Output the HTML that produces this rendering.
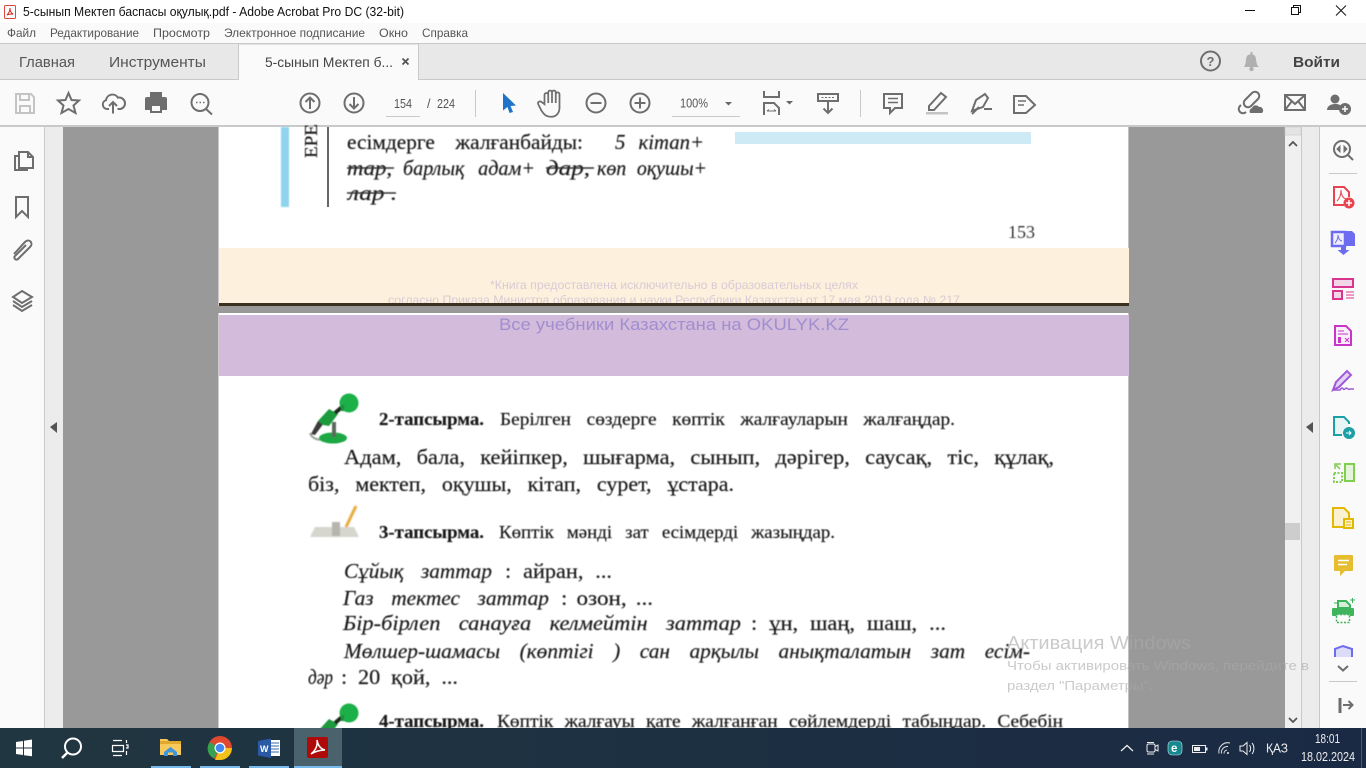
<!DOCTYPE html>
<html><head><meta charset="utf-8"><title>5-сынып Мектеп баспасы оқулық.pdf - Adobe Acrobat Pro DC (32-bit)</title>
<style>
html,body{margin:0;padding:0;width:1366px;height:768px;overflow:hidden;background:#fff}
svg{display:block;position:absolute;left:0;top:0}
text{font-family:"Liberation Sans",sans-serif}
.s text{font-family:"Liberation Serif",serif;fill:#151515;stroke:#151515;stroke-width:.15;font-size:21px}
.s .h{font-size:18px}
.i{font-style:italic}
.b{font-weight:bold}
.g{fill:none;stroke:#6e6e6e;stroke-width:2}
</style></head><body>
<svg width="1366" height="768" viewBox="0 0 1366 768">
<defs>
<filter id="bl" x="-5%" y="-5%" width="110%" height="110%"><feGaussianBlur stdDeviation="0.4"/></filter>
<filter id="bl2" x="-20%" y="-20%" width="140%" height="140%"><feGaussianBlur stdDeviation="0.7"/></filter>
<linearGradient id="tb" x1="0" x2="1" y1="0" y2="0"><stop offset="0" stop-color="#203640"/><stop offset="1" stop-color="#1a2a44"/></linearGradient>
<g id="mic">
<path d="M3 41C5 47 12 49 20 47" fill="none" stroke="#9aa59a" stroke-width="2"/>
<ellipse cx="26" cy="46" rx="14" ry="5.500" fill="#1aa843"/>
<rect x="25" y="30" width="4" height="15" fill="#5c6a5c"/>
<path d="M4 42L11 29 17 31 8 43Z" fill="#3a3a3a"/>
<path d="M11 29L22 17 31 22 22 34 16 33Z" fill="#1a9a3c"/>
<path d="M28 21L35 15" stroke="#1c2a1c" stroke-width="4"/>
<circle cx="42" cy="11" r="9.500" fill="#1fb04a"/>
<path d="M36 13L35 19" stroke="#1e8d3c" stroke-width="3"/>
</g>
</defs>

<!-- chrome backgrounds -->
<rect width="1366" height="23" fill="#fff"/>
<rect y="23" width="1366" height="20" fill="#fafafa"/>
<rect y="43" width="1366" height="1" fill="#c9c9c9"/>
<rect y="44" width="1366" height="35" fill="#e8e8e8"/>
<rect y="79" width="1366" height="1" fill="#c9c9c9"/>
<rect y="80" width="1366" height="45" fill="#fafafa"/>
<rect y="125" width="1366" height="2" fill="#c9c9c9"/>
<path d="M238.500 80V44H418.500V80" fill="#fafafa" stroke="#c9c9c9"/>
<rect x="239" y="78" width="179" height="3" fill="#fafafa"/>

<!-- viewer backgrounds -->
<rect x="0" y="127" width="44" height="601" fill="#fafafa"/>
<rect x="44" y="127" width="1" height="601" fill="#c9c9c9"/>
<rect x="45" y="127" width="18" height="601" fill="#ececec"/>
<rect x="63" y="127" width="1222" height="601" fill="#999"/>
<rect x="218" y="127" width="911" height="179" fill="#fff"/>
<rect x="218" y="313" width="911" height="415" fill="#fff"/>
<rect x="218" y="127" width="1" height="179" fill="#c9c9c9"/>
<rect x="218" y="313" width="1" height="415" fill="#ccc"/>
<rect x="1128" y="127" width="1" height="601" fill="#c0c0c0"/>

<!-- page top -->
<rect x="281" y="127" width="8" height="80" fill="#8fd3ef" filter="url(#bl2)"/>
<rect x="327" y="127" width="2" height="80" fill="#666"/>
<rect x="735" y="132" width="296" height="12" fill="#cdeaf5"/>
<g class="s" filter="url(#bl)">
<text transform="translate(317,158) rotate(-90)" textLength="34" lengthAdjust="spacingAndGlyphs" style="font-size:18px">ЕРЕ</text>
<text x="347" y="149" textLength="236" lengthAdjust="spacingAndGlyphs" word-spacing="15">есімдерге жалғанбайды:</text>
<text x="615" y="149" class="i" textLength="89" lengthAdjust="spacingAndGlyphs" word-spacing="8">5 кітап+</text>
<text x="347" y="175" class="i" textLength="45" lengthAdjust="spacingAndGlyphs">тар,</text>
<text x="403" y="175" class="i" textLength="132" lengthAdjust="spacingAndGlyphs" word-spacing="9">барлық адам+</text>
<text x="546" y="175" class="i" textLength="44" lengthAdjust="spacingAndGlyphs">дар,</text>
<text x="597" y="175" class="i" textLength="110" lengthAdjust="spacingAndGlyphs" word-spacing="6">көп оқушы+</text>
<text x="348" y="200" class="i" textLength="49" lengthAdjust="spacingAndGlyphs">лар .</text>
<text x="1008" y="238" textLength="27" lengthAdjust="spacingAndGlyphs" style="font-size:18px;fill:#333;stroke:none">153</text>
</g>
<g stroke="#333" stroke-width="1.400" filter="url(#bl)">
<path d="M347 168H394M546 168H594M347 193H396"/>
</g>
<rect x="219" y="248" width="910" height="55" fill="#fdf0dc"/>
<text x="490" y="289" font-size="12" fill="#d8cbd6" textLength="368" lengthAdjust="spacingAndGlyphs">*Книга предоставлена исключительно в образовательных целях</text>
<text x="388" y="304" font-size="12" fill="#d8cbd6" textLength="572" lengthAdjust="spacingAndGlyphs">согласно Приказа Министра образования и науки Республики Казахстан от 17 мая 2019 года № 217</text>
<rect x="219" y="303" width="910" height="3" fill="#3c3020"/>
<rect x="219" y="306" width="910" height="7" fill="#999"/>

<!-- page bottom -->
<rect x="219" y="315" width="910" height="61" fill="#d3bbdc"/>
<text x="499" y="330" font-size="16.500" fill="#a08fcf" textLength="350" lengthAdjust="spacingAndGlyphs">Все учебники Казахстана на OKULYK.KZ</text>

<use href="#mic" x="307" y="392" filter="url(#bl)"/>
<g filter="url(#bl2)">
<path d="M310 537H359L354 527H315Z" fill="#d6d6ce"/>
<path d="M332 536V522H340V536" fill="#b5b5ad"/>
<path d="M346 527L356 506" stroke="#e9a93a" stroke-width="3" fill="none"/>
</g>
<g class="s" filter="url(#bl)">
<text x="379" y="425" class="b h" textLength="105" lengthAdjust="spacingAndGlyphs">2-тапсырма.</text>
<text x="500" y="425" class="h" textLength="455" lengthAdjust="spacingAndGlyphs" word-spacing="10">Берілген сөздерге көптік жалғауларын жалғаңдар.</text>
<text x="344" y="464" textLength="710" lengthAdjust="spacingAndGlyphs" word-spacing="9">Адам, бала, кейіпкер, шығарма, сынып, дәрігер, саусақ, тіс, құлақ,</text>
<text x="308" y="491" textLength="426" lengthAdjust="spacingAndGlyphs" word-spacing="10">біз, мектеп, оқушы, кітап, сурет, ұстара.</text>
<text x="379" y="538" class="b h" textLength="105" lengthAdjust="spacingAndGlyphs">3-тапсырма.</text>
<text x="499" y="538" class="h" textLength="336" lengthAdjust="spacingAndGlyphs" word-spacing="8">Көптік мәнді зат есімдерді жазыңдар.</text>
<text x="344" y="578" class="i" textLength="148" lengthAdjust="spacingAndGlyphs" word-spacing="12">Сұйық заттар</text>
<text x="505" y="578" textLength="107" lengthAdjust="spacingAndGlyphs" word-spacing="6">: айран, ...</text>
<text x="343" y="605" class="i" textLength="206" lengthAdjust="spacingAndGlyphs" word-spacing="12">Газ тектес заттар</text>
<text x="561" y="605" textLength="92" lengthAdjust="spacingAndGlyphs" word-spacing="3">: озон, ...</text>
<text x="343" y="630" class="i" textLength="398" lengthAdjust="spacingAndGlyphs" word-spacing="12">Бір-бірлеп санауға келмейтін заттар</text>
<text x="751" y="630" textLength="195" lengthAdjust="spacingAndGlyphs" word-spacing="6">: ұн, шаң, шаш, ...</text>
<text x="344" y="658" class="i" textLength="686" lengthAdjust="spacingAndGlyphs" word-spacing="14">Мөлшер-шамасы (көптігі ) сан арқылы анықталатын зат есім-</text>
<text x="308" y="684" class="i" textLength="25" lengthAdjust="spacingAndGlyphs">дәр</text>
<text x="341" y="684" textLength="117" lengthAdjust="spacingAndGlyphs" word-spacing="5">: 20 қой, ...</text>
<text x="379" y="727" class="b h" textLength="105" lengthAdjust="spacingAndGlyphs">4-тапсырма.</text>
<text x="497" y="727" class="h" textLength="566" lengthAdjust="spacingAndGlyphs" word-spacing="6">Көптік жалғауы қате жалғанған сөйлемдерді табыңдар. Себебін</text>
</g>
<use href="#mic" x="307" y="702" filter="url(#bl)"/>

<!-- scrollbars -->
<rect x="1285" y="127" width="16" height="601" fill="#f0f0f0"/>
<rect x="1285" y="127" width="16" height="8" fill="#e4e4e4" stroke="#c9c9c9" stroke-width=".6"/>
<path d="M1289 146L1293 142 1297 146" fill="none" stroke="#555" stroke-width="1.800"/>
<rect x="1285" y="523" width="15" height="17" fill="#cdcdcd"/>
<path d="M1289 718L1293 722 1297 718" fill="none" stroke="#555" stroke-width="1.800"/>
<rect x="1301" y="127" width="1" height="601" fill="#c9c9c9"/>
<rect x="1302" y="127" width="17" height="601" fill="#ececec"/>
<rect x="1319" y="127" width="1" height="601" fill="#c9c9c9"/>
<rect x="1320" y="127" width="46" height="601" fill="#fafafa"/>
<path d="M50 427L57 422V433Z" fill="#555"/>
<path d="M1306 427L1313 422V433Z" fill="#555"/>

<!-- title bar -->
<rect x="4.500" y="5.500" width="11" height="13" rx="1" fill="#fff" stroke="#e0483e"/>
<path d="M7 15C9 13 10 10 10 8 10 11 11 13 13 14 11 14 9 14 7 15Z" fill="none" stroke="#d8261c"/>
<text x="23" y="16" font-size="12.500" fill="#111" textLength="381" lengthAdjust="spacingAndGlyphs">5-сынып Мектеп баспасы оқулық.pdf - Adobe Acrobat Pro DC (32-bit)</text>
<path d="M1245 10.500H1255" stroke="#111"/>
<path d="M1291.500 7.500h7v7h-7zM1293.500 7.500v-2h7v7h-2" fill="none" stroke="#111"/>
<path d="M1336 5.500L1346 15.500M1346 5.500L1336 15.500" stroke="#111"/>

<!-- menu -->
<g font-size="12" fill="#555">
<text x="7" y="37" textLength="29" lengthAdjust="spacingAndGlyphs">Файл</text>
<text x="50" y="37" textLength="89" lengthAdjust="spacingAndGlyphs">Редактирование</text>
<text x="153" y="37" textLength="57" lengthAdjust="spacingAndGlyphs">Просмотр</text>
<text x="224" y="37" textLength="141" lengthAdjust="spacingAndGlyphs">Электронное подписание</text>
<text x="379" y="37" textLength="29" lengthAdjust="spacingAndGlyphs">Окно</text>
<text x="422" y="37" textLength="46" lengthAdjust="spacingAndGlyphs">Справка</text>
</g>

<!-- tabs -->
<g font-size="14.500" fill="#555">
<text x="19" y="67" textLength="56" lengthAdjust="spacingAndGlyphs">Главная</text>
<text x="109" y="67" textLength="97" lengthAdjust="spacingAndGlyphs">Инструменты</text>
</g>
<text x="265" y="67" font-size="13.500" fill="#444" textLength="128" lengthAdjust="spacingAndGlyphs">5-сынып Мектеп б...</text>
<path d="M402.500 58.500L408.500 64.500M408.500 58.500L402.500 64.500" stroke="#555" stroke-width="1.800"/>
<circle cx="1210.500" cy="61" r="9.500" class="g"/>
<text x="1206.500" y="66" font-size="13" font-weight="bold" fill="#6e6e6e">?</text>
<path d="M1244 67C1246 65 1245.500 60 1246.500 57 1247.500 53.500 1254.500 53.500 1255.500 57 1256.500 60 1256 65 1259 67Z" fill="#b0b0b0"/><circle cx="1251.500" cy="69" r="2.200" fill="#b0b0b0"/><rect x="1250.500" y="52" width="2" height="3" fill="#b0b0b0"/>
<text x="1293" y="67" font-size="14.500" font-weight="bold" fill="#444" textLength="47" lengthAdjust="spacingAndGlyphs">Войти</text>

<!-- toolbar left -->
<path d="M16 94h15l3 3v16H16z" fill="none" stroke="#c4c4c4" stroke-width="2"/><path d="M20 94v6h9v-6M20 113v-7h10v7" fill="none" stroke="#c4c4c4" stroke-width="2"/>
<path d="M68.500 93L71.500 100 79 100.500 73.500 105.500 75.500 113 68.500 109 61.500 113 63.500 105.500 58 100.500 65.500 100Z" class="g"/>
<path d="M109 109h-2a4.500 4.500 0 0 1-1-8.800 6.500 6.500 0 0 1 12-2.500 5 5 0 0 1 2.500 11.300h-3" class="g"/><path d="M113 113.500V102M109 106L113 102 117 106" class="g"/>
<rect x="150" y="92" width="12" height="6" fill="#6e6e6e"/><path d="M145 99a2 2 0 0 1 2-2h18a2 2 0 0 1 2 2v11h-5v-5h-12v5h-5z" fill="#6e6e6e"/><rect x="151" y="105" width="10" height="7" fill="#fafafa" stroke="#6e6e6e" stroke-width="2"/>
<circle cx="200" cy="102.500" r="8.500" class="g"/><path d="M206 109L212 114.500" class="g" stroke-width="3"/><path d="M196 102.500h1.500M199.500 102.500h1.500M203 102.500h1.500" stroke="#6e6e6e" stroke-width="1.500"/>
<circle cx="310" cy="103" r="9.500" class="g"/><path d="M310 109V97.500M305.500 102L310 97.500 314.500 102" class="g"/>
<circle cx="354" cy="103" r="9.500" class="g"/><path d="M354 97V108.500M349.500 104L354 108.500 358.500 104" class="g"/>
<text x="394" y="108" font-size="12.500" fill="#555" textLength="18" lengthAdjust="spacingAndGlyphs">154</text>
<rect x="386" y="116" width="34" height="1" fill="#c9c9c9"/>
<text x="427" y="108" font-size="12.500" fill="#555">/</text>
<text x="437" y="108" font-size="12.500" fill="#555" textLength="18" lengthAdjust="spacingAndGlyphs">224</text>
<rect x="475" y="90" width="1" height="27" fill="#c9c9c9"/>

<path d="M503 93L516 105.500 510.500 106 513 112 509.500 113 507.500 107 503 110.500Z" fill="#1f73c9"/>
<g transform="translate(552,103) scale(1.250) translate(-551,-103)"><path d="M545 104V96.500a1.500 1.500 0 0 1 3 0V103V94.500a1.500 1.500 0 0 1 3 0V103V94.500a1.500 1.500 0 0 1 3 0V103V96a1.500 1.500 0 0 1 3 0V107c0 3-2 7-6.500 7s-6-2-8-5l-2.500-5c-1-2 1.500-3 3-1.500z" fill="none" stroke="#6e6e6e" stroke-width="1.400"/></g>
<circle cx="596" cy="103" r="9.500" class="g"/><path d="M590.500 103H601.500" class="g"/>
<circle cx="640" cy="103" r="9.500" class="g"/><path d="M634.500 103H645.500M640 97.500V108.500" class="g"/>
<text x="680" y="107.500" font-size="12.500" fill="#555" textLength="28" lengthAdjust="spacingAndGlyphs">100%</text>
<path d="M725 102H732L728.500 105.500Z" fill="#666"/>
<rect x="672" y="116" width="68" height="1" fill="#c9c9c9"/>
<path d="M764 91V97H779V91M764 115V103H774L779 108V115" class="g"/><path d="M767 111H776M767 111L769 109.500M776 111L774 109.500" stroke="#6e6e6e" fill="none"/>
<path d="M786 101H793L789.500 104.500Z" fill="#666"/>
<rect x="818" y="94" width="20" height="7" fill="none" stroke="#6e6e6e" stroke-width="2"/><path d="M821.500 97.500h2m1.500 0h2m1.500 0h2m1.500 0h2" stroke="#6e6e6e"/><path d="M828 101V113M823.500 108.500L828 113 832.500 108.500" class="g"/>
<rect x="860" y="90" width="1" height="27" fill="#c9c9c9"/>
<path d="M884 94H902V108H895L890 113V108H884Z" class="g"/><path d="M888 98.500H898M888 102.500H898" stroke="#6e6e6e" stroke-width="1.500"/>
<path d="M929 106L941 93 946 97 934 110H929Z" class="g"/><rect x="926" y="112" width="22" height="2.500" fill="#c4c4c4"/>
<path d="M972 111L976 100 985 94 988 98 983 107Z" class="g"/><path d="M972 114L979 107" class="g"/><path d="M984 109H992" stroke="#6e6e6e" stroke-width="2"/>
<path d="M1014 96H1026L1035 105 1026 113H1014Z" class="g"/><path d="M1018 101H1026M1018 105H1024" stroke="#6e6e6e" stroke-width="1.500"/>

<!-- toolbar right -->
<path d="M1248 104l7-7a4 4 0 0 1 6 6l-7 7a4 4 0 0 1-6-6zM1244 109l-1 1a4 4 0 0 0 6 6" fill="none" stroke="#6e6e6e" stroke-width="2" transform="translate(-3,-4)"/>
<path d="M1250 113a3.500 3.500 0 0 1 2-5 4 4 0 0 1 7-1 3.500 3.500 0 0 1 3 6z" fill="#6e6e6e"/>
<rect x="1285" y="95" width="20" height="15" fill="none" stroke="#6e6e6e" stroke-width="2"/><path d="M1285 95L1295 104 1305 95M1285 110L1292 101M1305 110L1298 101" class="g" stroke-width="1.300"/>
<circle cx="1335" cy="99" r="4.500" fill="#6e6e6e"/><path d="M1327 110c0-4 4-6 8-6s5 1 6 2v4z" fill="#6e6e6e"/><circle cx="1345" cy="109" r="6" fill="#6e6e6e"/><path d="M1342 109h6M1345 106v6" stroke="#fff" stroke-width="1.500"/>

<!-- left panel icons -->
<path d="M19 152H28L33 157V168H19Z" class="g"/><path d="M28 152V157H33" class="g" stroke-width="1.500"/><path d="M19 156H15V170H27V168" class="g"/>
<path d="M16 197H28V217L22 211 16 217Z" class="g"/>
<path d="M14 254L25 242c4-4 9 1 5 5L18 259c-2 2-5-1-3-3L26 245" fill="none" stroke="#6e6e6e" stroke-width="2"/>
<path d="M22 291L32 297 22 303 13 297Z" class="g" stroke-width="1.600"/><path d="M13 301L22 307 32 301" class="g" stroke-width="1.600"/><path d="M13 305L22 311 32 305" class="g" stroke-width="1.600"/>

<!-- right panel icons -->
<circle cx="1342" cy="149" r="8" class="g"/><path d="M1348 155L1353 160" class="g" stroke-width="3"/><path d="M1340 146L1337 149 1340 152ZM1344 146L1347 149 1344 152Z" fill="#6e6e6e" stroke="#6e6e6e"/>
<rect x="1329" y="173" width="28" height="1" fill="#c9c9c9"/>
<path d="M1344 205H1334V187H1344L1349 192V197" fill="none" stroke="#e8434f" stroke-width="2"/><path d="M1337 201C1340 198 1341 194 1341 190 1341 195 1343 198 1346 199" fill="none" stroke="#e8434f"/><circle cx="1349" cy="203" r="5.500" fill="#e8434f"/><path d="M1346 203h6M1349 200v6" stroke="#fff" stroke-width="1.500"/>
<rect x="1332" y="232" width="13" height="14" fill="#eeeeff" stroke="#6d6bf0" stroke-width="2.500"/><path d="M1345 231H1352L1355 234V246H1345Z" fill="#6d6bf0"/><path d="M1341 246H1346V250H1349.500L1343.500 255 1337.500 250H1341Z" fill="#6d6bf0"/><path d="M1335 243C1337 241 1338 238 1338 235 1338 238 1340 241 1342 241" fill="none" stroke="#6d6bf0"/>
<rect x="1333" y="279" width="20" height="8" fill="#f2d5e6" stroke="#d9358f" stroke-width="2"/><rect x="1333" y="291" width="9" height="8" fill="#f2d5e6" stroke="#d9358f" stroke-width="2"/><path d="M1346 292H1354M1346 295H1354M1346 298H1354" stroke="#d9358f"/>
<path d="M1335 326H1346L1351 331V345H1335Z" fill="#f9eefa" stroke="#c637c9" stroke-width="2"/><path d="M1338 331H1344M1338 334H1348" stroke="#c637c9"/><rect x="1338" y="337" width="3" height="6" fill="#c637c9"/><path d="M1345 338L1349 342M1349 338L1345 342" stroke="#c637c9"/>
<path d="M1333 390L1336 382 1347 371 1351 375 1339 387Z" fill="#e2d2f5" stroke="#9f58d8" stroke-width="2"/><path d="M1333 390H1340C1343 385 1343 391 1345 389 1347 386 1348 391 1350 389H1354" fill="none" stroke="#9f58d8" stroke-width="1.500"/>
<path d="M1342 435H1334V417H1344L1349 422V424" fill="#e8f5f5" stroke="#1aa0a6" stroke-width="2"/><circle cx="1349" cy="433" r="6" fill="#1aa0a6"/><path d="M1346 433H1351M1349 431L1351 433 1349 435" stroke="#fff" fill="none"/>
<rect x="1345" y="464" width="9" height="17" fill="#e6f4dc" stroke="#7fce4d" stroke-width="2"/><path d="M1334 473H1342V482H1334Z" fill="none" stroke="#7fce4d" stroke-width="2" stroke-dasharray="2 1.500"/><path d="M1336 465L1340 469M1335 469V464H1341" fill="none" stroke="#7fce4d" stroke-width="1.500"/>
<path d="M1333 508H1344L1349 513V527H1333Z" fill="#f9f1cf" stroke="#e2b800" stroke-width="2"/><rect x="1344" y="519" width="9" height="9" fill="#f9f1cf" stroke="#e2b800" stroke-width="2"/><path d="M1346 522h5M1346 525h5" stroke="#e2b800"/>
<path d="M1335 555H1352a1 1 0 0 1 1 1V570a1 1 0 0 1-1 1H1345L1340 576V571H1335a1 1 0 0 1-1-1V556a1 1 0 0 1 1-1Z" fill="#e6bd2e"/><path d="M1338 560.500H1349M1338 564.500H1347" stroke="#fff" stroke-width="1.500"/>
<path d="M1338 608V601H1346L1350 605V608Z" fill="#d5efd9" stroke="#3fb45c" stroke-width="2"/><rect x="1332" y="608" width="22" height="8" rx="1" fill="#3fb45c"/><rect x="1336.500" y="614.500" width="13" height="8" fill="#fafafa" stroke="#3fb45c" stroke-width="1.500" stroke-dasharray="2 1.500"/><path d="M1350 600h5M1352.500 598v5M1334 603h3" stroke="#3fb45c"/>
<path d="M1335 657V649L1343 646 1352 649V657" fill="#dcdcfa" stroke="#6d6bf0" stroke-width="2"/>
<path d="M1338 666L1343 670.500 1348 666" fill="none" stroke="#6e6e6e" stroke-width="2"/>
<rect x="1329" y="681" width="28" height="1" fill="#c9c9c9"/>
<path d="M1340 698V713" stroke="#6e6e6e" stroke-width="3"/><path d="M1343 705H1352M1348.500 701L1352.500 705 1348.500 709" fill="none" stroke="#6e6e6e" stroke-width="2"/>

<!-- activation watermark -->
<g fill="#aaa" fill-opacity=".62">
<text x="1007" y="649" font-size="18" textLength="184" lengthAdjust="spacingAndGlyphs">Активация Windows</text>
<text x="1007" y="670" font-size="13.300" textLength="302" lengthAdjust="spacingAndGlyphs">Чтобы активировать Windows, перейдите в</text>
<text x="1007" y="690" font-size="13.300" textLength="146" lengthAdjust="spacingAndGlyphs">раздел "Параметры".</text>
</g>

<!-- taskbar -->
<rect y="728" width="1366" height="40" fill="url(#tb)"/>
<path d="M16 742L23 741V747.500H16ZM24 740.800L32 739.500V747.500H24ZM16 748.500H23V755L16 754ZM24 748.500H32V756.300L24 755.200Z" fill="#fff"/>
<circle cx="73" cy="746.500" r="8" fill="none" stroke="#fff" stroke-width="2"/><path d="M67.500 752.500L62 758" stroke="#fff" stroke-width="2.500"/>
<path d="M113 740.500H122M112.500 745.500H123.500V751.500H112.500ZM113 755.500H122M126.500 740V743M126 745H128V748H126M126.500 751V755" fill="none" stroke="#fff" stroke-width="1.200"/>
<path d="M160 739H167L169 741H181V755H160Z" fill="#f7c95c"/><rect x="160" y="741" width="21" height="3" fill="#e0a92e"/><path d="M164 756V752L170.500 747 177 752V756H173V752.500H168V756Z" fill="#3c95dd"/>
<circle cx="220" cy="748" r="12" fill="#e0492f"/><path d="M209.800 742L220 748 214 758.500C207 755 206 747 209.800 742Z" fill="#38a14f"/><path d="M220 748H231.800C232 754 227 760 220 760H215Z" fill="#f2c21b"/><circle cx="220" cy="748" r="5.500" fill="#fff"/><circle cx="220" cy="748" r="4.300" fill="#4288ee"/>
<rect x="268" y="740" width="12" height="16" fill="#fff"/><path d="M271 743H279M271 746H279M271 749H279M271 752H279" stroke="#3a68a8"/><path d="M258 741L271 738.500V758L258 755.500Z" fill="#2a5aa5"/><text x="260" y="752" font-size="9" font-weight="bold" fill="#fff">W</text>
<rect x="294" y="728" width="48" height="40" fill="#4a626c"/>
<rect x="307" y="737" width="21" height="21" rx="2" fill="#ae0a0a"/>
<path d="M311 754C315 751 318 746 317 740 318 746 321 749 325 750 320 750 316 751 311 754Z" fill="none" stroke="#fff" stroke-width="1.500"/>
<g fill="#76b9ed"><rect x="151" y="766" width="40" height="2"/><rect x="200" y="766" width="40" height="2"/><rect x="249" y="766" width="40" height="2"/><rect x="294" y="766" width="48" height="2"/></g>
<path d="M1121 751L1127 745.500 1133 751" fill="none" stroke="#eee" stroke-width="1.300"/>
<rect x="1147" y="744" width="8" height="8" rx="1.500" fill="none" stroke="#eee"/><path d="M1155 746.500L1158 745V751L1155 749.500M1147 742.500H1154M1147 754H1154" fill="none" stroke="#eee"/>
<rect x="1168" y="741" width="14" height="14" rx="4" fill="#17888f" stroke="#bfe8e8" stroke-width=".6"/><text x="1171" y="752" font-size="11.500" font-weight="bold" fill="#fff">e</text>
<rect x="1192.500" y="745.500" width="13" height="7" fill="none" stroke="#eee"/><rect x="1194" y="747" width="6" height="4" fill="#eee"/><rect x="1206" y="747.500" width="1.500" height="3" fill="#eee"/>
<path d="M1219 753.500A9 9 0 0 1 1230 743M1221.500 753.500A6 6 0 0 1 1228 746.500M1224 753.500A3.500 3.500 0 0 1 1227 750" fill="none" stroke="#ddd" stroke-width="1"/><circle cx="1228" cy="753" r="1" fill="#eee"/>
<path d="M1240 746H1243L1247 742.500V754.500L1243 751H1240ZM1249.500 745C1251 747 1251 750 1249.500 752M1252 743C1254.500 746 1254.500 751 1252 754" fill="none" stroke="#eee"/>
<text x="1266" y="752.500" font-size="12.500" fill="#eee" textLength="22" lengthAdjust="spacingAndGlyphs">ҚАЗ</text>
<text x="1315" y="743" font-size="12.500" fill="#eee" textLength="25" lengthAdjust="spacingAndGlyphs">18:01</text>
<text x="1301" y="761" font-size="12.500" fill="#eee" textLength="54" lengthAdjust="spacingAndGlyphs">18.02.2024</text>
<rect x="1361" y="728" width="1" height="40" fill="#47586b"/>
</svg>
</body></html>
